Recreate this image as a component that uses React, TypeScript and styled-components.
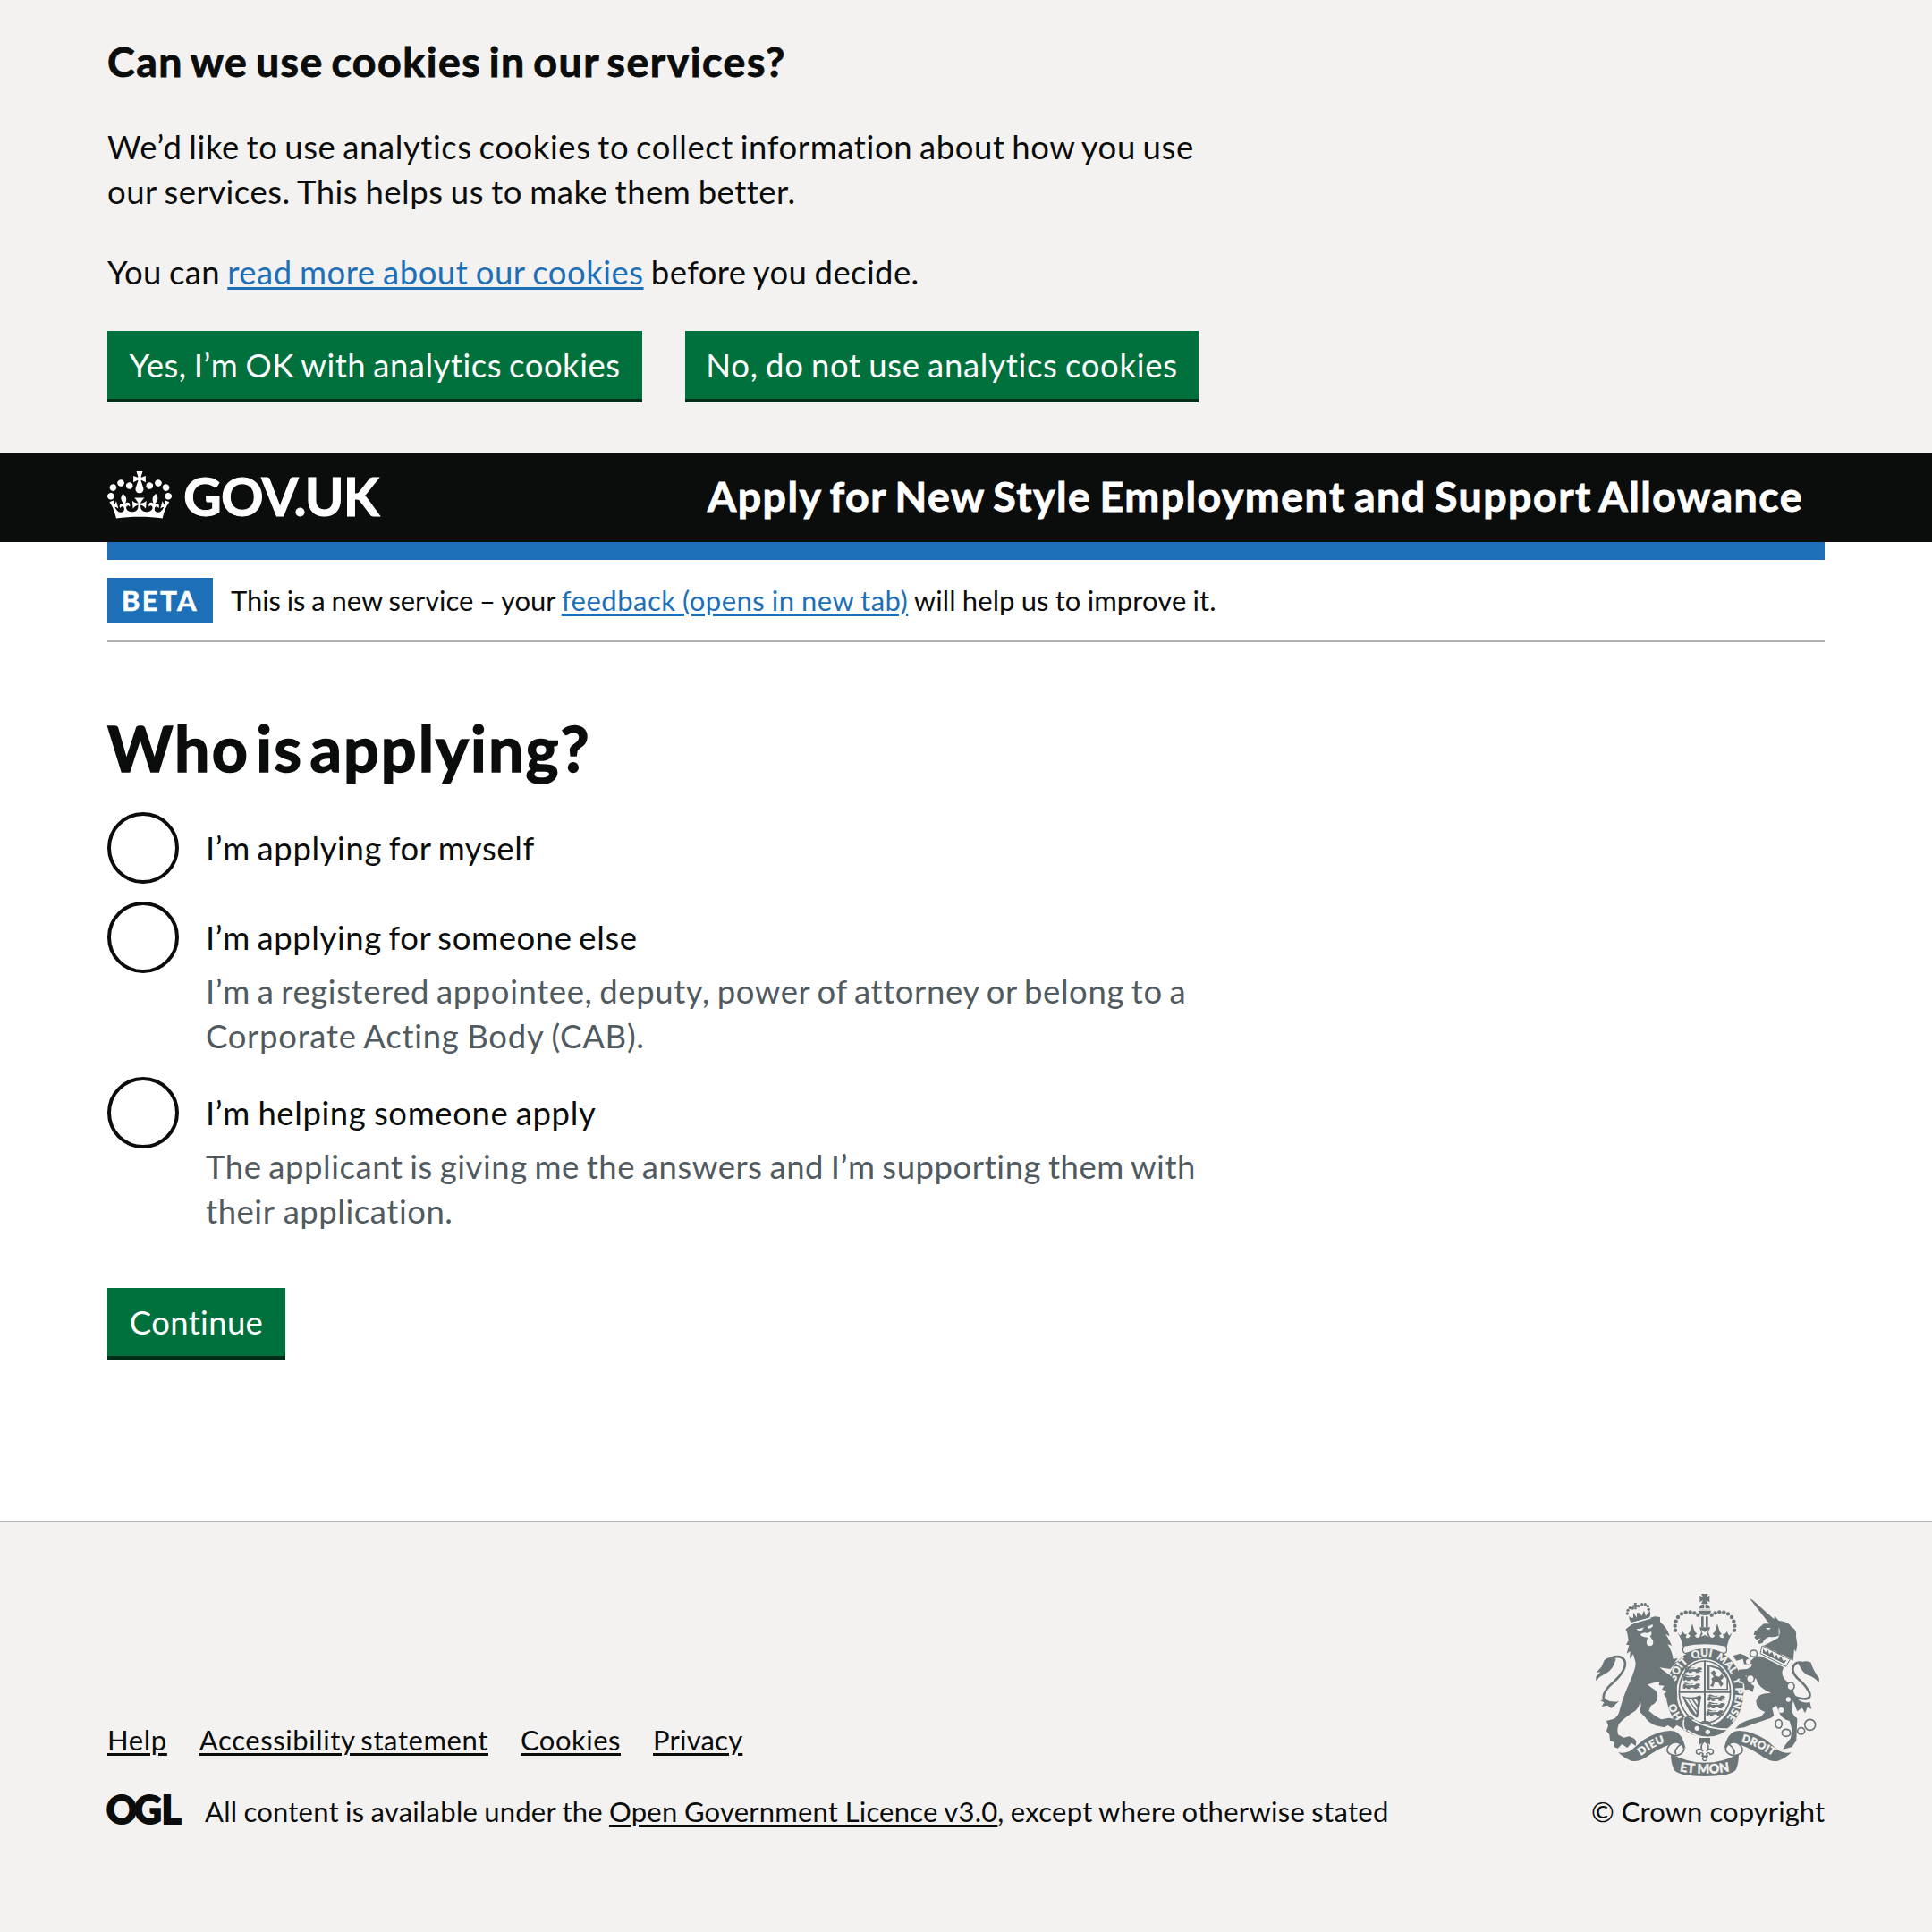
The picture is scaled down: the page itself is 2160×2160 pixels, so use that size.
import React from "react";
import styled, { createGlobalStyle } from "styled-components";

const ink = "#0b0c0c";
const blue = "#1d70b8";
const green = "#00703c";
const pale = "#f3f2f1";
const line = "#b1b4b6";
const crestGrey = "#6c7678";

const GlobalStyle = createGlobalStyle`
  * { box-sizing: border-box; }
  body {
    margin: 0;
    background: #fff;
    color: ${ink};
    font-family: Lato, "Liberation Sans", sans-serif;
    font-variant-ligatures: none;
  }
  h1, h2, p { margin: 0; }
`;

const Page = styled.div`
  display: flex;
  flex-direction: column;
  min-height: 2160px;
`;

const Container = styled.div`
  width: 1920px;
  margin: 0 auto;
`;

/* One run of text, tracked to its own width */
const Run = styled.span<{ $ls?: number; $ws?: number }>`
  letter-spacing: ${(p) => p.$ls ?? 0}px;
  word-spacing: ${(p) => p.$ws ?? 0}px;
  white-space: nowrap;
`;

const Link = styled.a<{ $tone?: string; $ls?: number; $ws?: number }>`
  color: ${(p) => p.$tone ?? ink};
  letter-spacing: ${(p) => p.$ls ?? 0}px;
  word-spacing: ${(p) => p.$ws ?? 0}px;
  white-space: nowrap;
  text-decoration: underline;
  text-decoration-thickness: 3px;
  text-underline-offset: 3px;
`;

const CookieBanner = styled.section`
  height: 506px;
  padding-top: 38px;
  background: ${pale};
`;

const CookieHeading = styled.h2`
  font-size: 46.5px;
  line-height: 60px;
  font-weight: 700;
  -webkit-text-stroke: 0.9px currentColor;
`;

const Body = styled.p`
  font-size: 36.5px;
  line-height: 50px;
`;

const CookieCopy = styled.div`
  display: flex;
  flex-direction: column;
  gap: 40px;
  margin: 41px 0;
`;

const ButtonRow = styled.div`
  display: flex;
  gap: 48px;
`;

const Button = styled.button<{ $width: number }>`
  width: ${(p) => p.$width}px;
  height: 80px;
  padding: 13px 0 17px;
  border: 0;
  background: ${green};
  box-shadow: inset 0 -4px 0 #002d18;
  color: #fff;
  font-family: inherit;
  font-size: 36.5px;
  line-height: 50px;
  white-space: nowrap;
`;

const Header = styled.header`
  height: 100px;
  background: ${ink};
  color: #fff;
`;

const HeaderInner = styled(Container)`
  display: flex;
  justify-content: space-between;
  padding-right: 24px;
`;

const Brand = styled.div`
  display: flex;
  align-items: flex-start;
  gap: 13px;
`;

const CrownSvg = styled.svg`
  display: block;
  width: 72px;
  height: 53px;
  margin-top: 21px;
`;

const BrandName = styled.span`
  margin-top: 14px;
  font-size: 59px;
  line-height: 70px;
  font-weight: 700;
  letter-spacing: -0.8px;
  -webkit-text-stroke: 1px currentColor;
`;

const ServiceName = styled.span`
  margin-top: 18px;
  font-size: 46.5px;
  line-height: 60px;
  font-weight: 700;
  -webkit-text-stroke: 0.9px currentColor;
`;

const BlueBar = styled(Container)`
  height: 20px;
  background: ${blue};
`;

const Phase = styled(Container)`
  display: flex;
  align-items: center;
  gap: 20px;
  height: 92px;
  border-bottom: 2px solid ${line};
`;

const Tag = styled.strong`
  width: 118px;
  height: 50px;
  padding-left: 16px;
  background: ${blue};
  color: #fff;
  font-size: 31px;
  line-height: 50px;
  letter-spacing: 2.45px;
  -webkit-text-stroke: 0.6px currentColor;
`;

const Small = styled.p`
  font-size: 31px;
  line-height: 40px;
  white-space: nowrap;
`;

const Main = styled(Container)`
  height: 982px;
  padding-top: 78px;
`;

const Title = styled.h1`
  margin-bottom: 32px;
  font-size: 70px;
  line-height: 80px;
  font-weight: 700;
  -webkit-text-stroke: 1.5px currentColor;
`;

const Options = styled.div`
  display: flex;
  flex-direction: column;
  gap: 21px;
`;

const Option = styled.div<{ $tight?: boolean }>`
  margin-bottom: ${(p) => (p.$tight ? "-1px" : "0")};
`;

const Choice = styled.label`
  display: flex;
  align-items: center;
  gap: 30px;
  height: 80px;
  font-size: 36.5px;
  line-height: 50px;
`;

const Radio = styled.span`
  width: 80px;
  height: 80px;
  border: 4px solid ${ink};
  border-radius: 50%;
`;

const Hint = styled(Body)`
  margin: -5px 0 0 110px;
  color: #505a5f;
`;

const Submit = styled.div`
  margin-top: 61px;
`;

const Footer = styled.footer`
  flex: 1;
  border-top: 2px solid ${line};
  background: ${pale};
`;

const FooterInner = styled(Container)`
  display: flex;
  justify-content: space-between;
  align-items: flex-end;
  height: 343px;
`;

const FooterLinks = styled.nav`
  display: flex;
  gap: 36px;
  margin-bottom: 40px;
  font-size: 31px;
  line-height: 40px;
`;

const Licence = styled.div`
  display: flex;
  gap: 27px;
`;

const OglSvg = styled.svg`
  display: block;
  width: 82px;
  height: 34px;
  margin-top: 1px;
  overflow: visible;
`;

const Copyright = styled.div`
  display: flex;
  flex-direction: column;
  align-items: flex-start;
  width: 261px;
`;

const CrestSvg = styled.svg`
  display: block;
  width: 252px;
  height: 206px;
  margin: 0 0 18px 4px;
`;

const Crown = () => (
  <CrownSvg viewBox="0 0 132 97" fill="#fff">
    <path d="M25 30.2c3.5 1.5 7.7-.2 9.1-3.7 1.5-3.6-.2-7.8-3.9-9.2-3.6-1.4-7.6.3-9.1 3.9-1.4 3.5.3 7.5 3.9 9zM9 39.5c3.6 1.5 7.8-.2 9.2-3.7 1.5-3.6-.2-7.8-3.9-9.1-3.6-1.5-7.6.2-9.1 3.8-1.4 3.5.3 7.5 3.8 9zM4.4 57.2c3.5 1.5 7.7-.2 9.1-3.8 1.5-3.6-.2-7.7-3.9-9.1-3.5-1.5-7.6.3-9.1 3.8-1.4 3.5.3 7.6 3.9 9.1zm38.3-21.4c3.5 1.5 7.7-.2 9.1-3.8 1.5-3.6-.2-7.7-3.9-9.1-3.6-1.5-7.6.3-9.1 3.8-1.3 3.6.4 7.7 3.9 9.1zm64.4-5.6c-3.6 1.5-7.8-.2-9.1-3.7-1.5-3.6.2-7.8 3.8-9.2 3.6-1.4 7.7.3 9.2 3.9 1.3 3.5-.4 7.5-3.9 9zm15.9 9.3c-3.6 1.5-7.7-.2-9.1-3.7-1.5-3.6.2-7.8 3.7-9.1 3.6-1.5 7.7.2 9.2 3.8 1.5 3.5-.3 7.5-3.8 9zm4.7 17.7c-3.6 1.5-7.8-.2-9.2-3.8-1.5-3.6.2-7.7 3.9-9.1 3.6-1.5 7.7.3 9.2 3.8 1.3 3.5-.4 7.6-3.9 9.1zM89.3 35.8c-3.6 1.5-7.8-.2-9.2-3.8-1.4-3.6.2-7.7 3.9-9.1 3.6-1.5 7.7.3 9.2 3.8 1.4 3.6-.3 7.7-3.9 9.1zM69.7 17.7l8.9 4.7V9.3l-8.9 2.8c-.2-.3-.5-.6-.9-.9L72.4 0H59.6l3.5 11.2c-.3.3-.6.5-.9.9l-8.8-2.8v13.1l8.8-4.7c.3.3.6.7.9.9l-5 15.4v.1c-.2.8-.4 1.6-.4 2.4 0 4.1 3.1 7.5 7 8.1h.2c.3 0 .7.1 1 .1.4 0 .7 0 1-.1h.2c4-.6 7.1-4.1 7.1-8.1 0-.8-.1-1.7-.4-2.4V34l-5.1-15.4c.4-.2.7-.6 1-.9zM66 92.8c16.9 0 32.8 1.1 47.1 3.2 4-16.9 8.9-26.7 14-33.5l-9.6-3.4c1 4.9 1.1 7.2 0 10.2-1.5-1.4-3-4.3-4.2-8.7L108.6 76c2.8-2 5-3.2 7.5-3.3-4.4 9.4-10 11.9-13.6 11.2-4.3-.8-6.3-4.6-5.6-7.9 1-4.7 5.7-5.9 8-.5 4.3-8.7-3-11.4-7.6-8.8 7.1-7.2 7.9-13.5 2.1-21.1-8 6.1-8.1 12.3-4.5 20.8-4.7-5.4-12.1-2.5-9.5 6.2 3.4-5.2 7.9-2 7.2 3.1-.6 4.3-6.4 7.8-13.5 7.2-10.3-.9-10.9-8-11.2-13.8 2.5-.5 7.1 1.8 11 7.3L80.2 60c-4.1 4.4-8 5.3-12.3 5.4 1.4-4.4 8-11.6 8-11.6H55.5s6.4 7.2 7.9 11.6c-4.2-.1-8-1-12.3-5.4l1.4 16.4c3.9-5.5 8.5-7.7 10.9-7.3-.3 5.8-.9 12.8-11.1 13.8-7.2.6-12.9-2.9-13.5-7.2-.7-5 3.8-8.3 7.1-3.1 2.7-8.7-4.6-11.6-9.4-6.2 3.7-8.5 3.6-14.7-4.6-20.8-5.8 7.6-5 13.9 2.2 21.1-4.7-2.6-11.9.1-7.7 8.8 2.3-5.5 7.1-4.2 8.1.5.7 3.3-1.3 7.1-5.7 7.9-3.5.7-9-1.8-13.5-11.2 2.5.1 4.7 1.3 7.5 3.3l-4.7-15.4c-1.2 4.4-2.7 7.2-4.3 8.7-1.1-3-.9-5.3 0-10.2l-9.5 3.4c5 6.9 9.9 16.7 14 33.5 14.8-2.1 30.8-3.2 47.7-3.2z" />
  </CrownSvg>
);

const archPearls = [
  [369, 188], [368, 173], [371, 158], [378, 144], [390, 133], [404, 128], [419, 127], [433, 130], [445, 137],
];

const mottoWords: [string, number][] = [
  ["HO", 114], ["SOIT", 253], ["QUI", 342], ["MAL", 428], ["Y", 492], ["PENSE", 566],
];

const Fleur = () => (
  <path d="M0 -26Q14 -12 4 2Q10 -8 18 -2Q22 8 12 10Q10 2 4 8L6 14L-6 14L-4 8Q-10 2 -12 10Q-22 8 -18 -2Q-10 -8 -4 2Q-14 -12 0 -26Z" />
);

const StripLion = () => (
  <path d="M-32 6L-30 -6L-24 -8L-18 -3L8 -4L14 -9L24 -9L28 -3L20 0L28 6L16 5L18 9L6 9L4 4L-8 4L-6 9L-18 9L-20 4L-26 9Z M-30 -9L-24 -13L-8 -8L4 -9L0 -6L-16 -6Z" />
);

const Ribbon = () => (
  <g>
    <path d="M178 598Q204 603 224 588L262 556Q310 526 352 525Q384 524 397 562L404 584L384 570Q372 562 350 572Q318 580 268 616Q246 630 222 626Q198 618 178 598Z" stroke={pale} strokeWidth="3" paintOrder="stroke" />
    <path d="M384 568Q404 580 396 594Q386 608 368 608Q344 604 342 592Q340 580 356 568Q372 560 384 568Z" fill={pale} stroke={crestGrey} strokeWidth="5" />
    <path d="M371 604Q362 588 390 568" fill="none" stroke={crestGrey} strokeWidth="5" />
  </g>
);

const Crest = () => (
  <CrestSvg viewBox="99 63 756 618" fill={crestGrey}>
    <defs>
      <path id="garter" d="M468 518A103 121 0 0 1 468 276A103 121 0 0 1 468 518" />
      <path id="scrollLeft" d="M242 619Q300 570 348 562" />
      <path id="scrollMid" d="M366 657Q468 679 572 657" />
      <path id="scrollRight" d="M580 559Q640 572 706 616" />
    </defs>

    {/* royal crown */}
    <path d="M456 66H479L473 77L484 71V94L473 88L479 99H456L462 88L451 94V71L462 77Z" />
    <path d="M449 118Q450 100 468 100Q485 100 486 118Z" />
    <path d="M446 122H489Q488 138 468 138Q447 138 446 122Z" />
    <path d="M466 100H470V118H466ZM449 114H486V116H449Z" fill={pale} />
    <path d="M456 142H464V178H456ZM471 142H479V178H471Z" />
    {archPearls.map(([x, y]) => (
      <React.Fragment key={`${x}-${y}`}>
        <circle cx={x} cy={y} r="6.6" />
        <circle cx={936 - x} cy={y} r="6.6" />
      </React.Fragment>
    ))}
    <path d="M376 196L386 206L394 192Q400 206 408 200L404 212Q412 218 420 206L412 200L418 192L426 166L434 192L442 200L434 206Q442 218 450 210L456 196L450 178H486L480 196L486 210Q494 218 502 206L494 200L502 192L510 166L518 192L524 200L516 206Q524 218 532 212L528 200Q536 206 542 192L550 206L560 196Q546 220 542 244Q468 228 394 244Q392 220 376 196Z" />
    <path d="M455 186L468 194L481 186L475 200L481 210L468 204L455 210L461 200Z" fill={pale} />
    <path d="M398 240Q468 226 538 240Q548 262 532 266Q468 240 404 266Q388 262 398 240Z" fill={pale} stroke={crestGrey} strokeWidth="4" />

    {/* garter and shield */}
    <ellipse cx="468" cy="397" rx="130" ry="148" />
    <ellipse cx="468" cy="397" rx="95" ry="113" fill={pale} />
    <ellipse cx="468" cy="395" rx="86" ry="104" fill="none" stroke={crestGrey} strokeWidth="5" />
    <path d="M465 290H471V500H465ZM382 392H554V398H382Z" />
    {[0, 1, 2].map((i) => (
      <React.Fragment key={i}>
        <g transform={`translate(${i === 0 ? 432 : 426} ${322 + i * 27})`}><StripLion /></g>
        <g transform={`translate(${i === 2 ? 504 : 509} ${416 + i * 25})`}><StripLion /></g>
      </React.Fragment>
    ))}
    <path d="M480 306H484V384H544V388H476V302ZM484 304L520 314L546 346V388H541V350L516 320L484 310Z" />
    <path d="M488 330L498 322L506 330L502 340L516 344L526 334L532 346L522 356L530 368L522 378L514 364L502 360L496 378L486 374L494 362L490 350L498 344Z" />
    <path d="M392 408Q424 420 452 406L456 412L446 474Q446 484 438 480L418 462Q404 440 392 408ZM400 415L438 470L441 466L410 418ZM414 419L442 458V446L424 420ZM430 420L443 438L445 430L438 418Z" fillRule="evenodd" />
    <g fill={pale} stroke={pale} strokeWidth="1" fontFamily="Lato, sans-serif" fontWeight="900" fontSize="35">
      {mottoWords.map(([word, at]) => (
        <text key={word} textAnchor="middle">
          <textPath href="#garter" startOffset={at}>{word}</textPath>
        </text>
      ))}
    </g>
    <path d="M400 482Q392 500 400 520L414 526Q440 545 476 547Q520 548 548 520Q480 520 426 488Q414 470 400 482Z" stroke={pale} strokeWidth="5" />
    <path d="M398 488Q414 470 428 484Q408 492 408 524" fill="none" stroke={crestGrey} strokeWidth="5" />
    <circle cx="442" cy="517" r="8" fill={pale} />
    <circle cx="478" cy="529" r="8" fill={pale} />
    <path d="M454 502L460 492H478L488 498L490 508Z" />

    {/* lion */}
    <path d="M166 440Q132 434 128 414Q126 392 164 360Q206 320 200 294Q192 268 156 280" fill="none" stroke={crestGrey} strokeWidth="8" />
    <path d="M170 284Q146 272 130 290L122 310L104 330L118 328L103 344L103 358Q116 342 134 334Q160 322 170 284Z" />
    <path d="M134 418L118 424L130 430L122 444L142 440L154 450L180 426Q152 432 134 418Z" />
    <path d="M203 184L224 168Q262 152 300 142L318 144L318 160Q342 180 350 208L336 200Q352 224 357 240L343 234Q358 258 362 284L378 282L366 296L376 292L352 318L316 313L350 338Q374 356 374 388L376 414L362 426L348 420L354 412L338 414L330 402L342 394L324 386L332 374L314 372L316 360Q298 362 276 370Q286 380 300 388Q312 398 309 416Q304 434 288 440L280 458Q300 476 322 487L348 482Q374 485 389 500L387 514L374 506L362 518L344 507L332 514L304 508Q280 500 266 478L250 462L254 440L248 408Q256 440 235 458Q198 480 180 502Q172 520 177 538L196 548L214 544Q236 550 238 562L236 576L222 566L208 582L190 570L176 584L164 580L165 564L150 558L148 538L138 526L144 508L138 492L160 486Q178 480 184 450Q194 410 216 362Q236 318 236 298L228 268L216 284L218 258L206 266L214 238L204 236L212 222L208 198Z" />
    <path d="M238 184L252 182L264 178Q258 192 248 192ZM275 176L292 168L294 174Q288 184 278 182Z" fill={pale} />
    <path d="M252 200L266 196L276 198L288 192Q292 204 284 208L294 222Q298 240 284 241Q270 240 273 224L276 212L262 210L254 206Z" fill={pale} />
    <path d="M214 140Q214 166 230 160L280 147Q288 138 284 122L276 132L270 140L264 122L256 140L250 130L240 130L240 146L228 128L228 146L220 146Z" />
    <path d="M222 165L286 147" stroke={pale} strokeWidth="4" />
    <path d="M230 96H240L238 102H244V110H238L240 118H232L232 110H226V103H232Z" />
    {[[208, 132], [210, 121], [217, 113], [226, 114], [246, 107], [257, 101], [268, 101], [277, 107], [280, 118]].map(([x, y]) => (
      <circle key={`${x}-${y}`} cx={x} cy={y} r="5" />
    ))}

    {/* unicorn */}
    <path d="M618 81L628 86L702 152L684 166Z" />
    <path d="M684 166L700 150L702 140L716 156Q748 158 758 176Q778 186 774 208L778 236L774 260L768 252L764 290L745 278L730 270L716 268L704 258L692 256L680 246L664 240Q690 228 714 214Q724 196 716 178L716 206Q702 212 684 210Q666 216 662 230L650 234L646 226L656 214L642 220L634 212L640 204L632 204L634 194Q650 180 666 166Z" />
    <path d="M672 180L690 180L682 187Z" fill={pale} />
    <path d="M660 240L754 286L740 310L654 266Z" fill={pale} stroke={crestGrey} strokeWidth="3" />
    <path d="M664 250L672 262L680 254L684 268L694 260L700 276L710 270L714 284L724 276L730 290L742 288L734 300L662 264Z" />
    <path d="M640 274L660 276L732 312Q718 342 746 362Q774 386 766 418L760 444Q758 472 778 484L775 558L760 580L730 587L738 572L756 550L760 520L752 492Q724 486 716 460L708 440L694 450L700 474L690 482L626 504L600 514L570 518L588 500L612 490L656 478L670 462Q640 452 640 426Q644 402 674 400L690 398Q646 380 640 350L604 340L614 360L634 376L628 396L616 386L602 388L600 368L578 344L582 320L610 318L624 310L626 300L600 302L596 284L574 290L562 274L586 266L606 274L622 290Z" />
    <path d="M766 410Q826 430 820 400Q810 376 782 352Q750 320 772 300Q782 292 800 300" fill="none" stroke={crestGrey} strokeWidth="8" />
    <path d="M782 300Q800 286 824 296Q830 320 852 350L851 364Q836 344 812 338Q796 332 782 300Z" />
    <path d="M768 400Q786 440 820 428L826 452L812 446L804 466L794 448L778 460Q764 430 758 400Z" />
    <g fill={pale} stroke={crestGrey} strokeWidth="5">
      <ellipse cx="632" cy="266" rx="12" ry="11" />
      <ellipse cx="621" cy="350" rx="13" ry="13" />
      <ellipse cx="756" cy="376" rx="12" ry="13" />
      <ellipse cx="716" cy="502" rx="11" ry="14" />
      <ellipse cx="741" cy="532" rx="14" ry="12" />
      <ellipse cx="791" cy="526" rx="12" ry="11" />
      <circle cx="821" cy="505" r="18" />
    </g>
    <circle cx="748" cy="420" r="8" fill={pale} />
    <circle cx="724" cy="456" r="9" fill={pale} />
    <circle cx="614" cy="293" r="8" fill={pale} />

    {/* motto scroll */}
    <path d="M450 549H486V572L468 560L450 572Z" />
    <g transform="translate(468 592) scale(1.5 1.25)" fill={pale} stroke={crestGrey} strokeWidth="3.4"><Fleur /></g>
    <circle cx="468" cy="619" r="7" fill={pale} stroke={crestGrey} strokeWidth="4" />
    <Ribbon />
    <g transform="translate(936 0) scale(-1 1)"><Ribbon /></g>
    <path d="M354 602Q410 632 468 632Q528 632 582 602Q582 632 573 655Q566 666 540 672Q504 678 468 678Q432 678 396 672Q370 666 364 655Q354 632 354 602Z" />
    <g fill={pale} stroke={pale} strokeWidth="1.2" fontFamily="Lato, sans-serif" fontWeight="900">
      <text textAnchor="middle" fontSize="36" letterSpacing="2"><textPath href="#scrollLeft" startOffset="51%">DIEU</textPath></text>
      <text textAnchor="middle" fontSize="43"><textPath href="#scrollMid" startOffset="49%">ET MON</textPath></text>
      <text textAnchor="middle" fontSize="36" letterSpacing="1"><textPath href="#scrollRight" startOffset="50%">DROIT</textPath></text>
    </g>
  </CrestSvg>
);

export default function App() {
  return (
    <Page>
      <GlobalStyle />
      <CookieBanner>
        <Container>
          <CookieHeading><Run $ls={1.5} $ws={-4.3}>Can we use cookies in our services?</Run></CookieHeading>
          <CookieCopy>
            <Body>
              <Run $ls={0.6} $ws={-2.2}>We’d like to use analytics cookies to collect information about how you use</Run>
              <br />
              <Run $ls={0.5} $ws={-1.5}>our services. This helps us to make them better.</Run>
            </Body>
            <Body>
              <Run $ls={0.25} $ws={-1.1}>You can </Run>
              <Link $tone={blue} $ls={0.5} $ws={-1.4}>read more about our cookies</Link>
              <Run $ls={0.4} $ws={-1.5}> before you decide.</Run>
            </Body>
          </CookieCopy>
          <ButtonRow>
            <Button $width={598}><Run $ls={0.5} $ws={-1.7}>Yes, I’m OK with analytics cookies</Run></Button>
            <Button $width={574}><Run $ls={0.7} $ws={-1.7}>No, do not use analytics cookies</Run></Button>
          </ButtonRow>
        </Container>
      </CookieBanner>

      <Header>
        <HeaderInner>
          <Brand>
            <Crown />
            <BrandName>GOV.UK</BrandName>
          </Brand>
          <ServiceName><Run $ls={1.46} $ws={-3.4}>Apply for New Style Employment and Support Allowance</Run></ServiceName>
        </HeaderInner>
      </Header>
      <BlueBar />
      <Phase>
        <Tag>BETA</Tag>
        <Small>
          <Run $ls={-0.1} $ws={-0.9}>This is a new service – your </Run>
          <Link $tone={blue} $ls={0.5} $ws={-1}>feedback (opens in new tab)</Link>
          <Run $ls={0.1} $ws={-0.9}> will help us to improve it.</Run>
        </Small>
      </Phase>

      <Main as="main">
        <Title><Run $ls={2.05} $ws={-11.6}>Who is applying?</Run></Title>
        <Options>
          <Option $tight>
            <Choice><Radio /><Run $ls={0.6} $ws={-2.2}>I’m applying for myself</Run></Choice>
          </Option>
          <Option>
            <Choice><Radio /><Run $ls={0.6} $ws={-2.3}>I’m applying for someone else</Run></Choice>
            <Hint>
              <Run $ls={0.6} $ws={-2.1}>I’m a registered appointee, deputy, power of attorney or belong to a</Run>
              <br />
              <Run $ls={0.7} $ws={-1.1}>Corporate Acting Body (CAB).</Run>
            </Hint>
          </Option>
          <Option>
            <Choice><Radio /><Run $ls={0.6} $ws={-1.4}>I’m helping someone apply</Run></Choice>
            <Hint>
              <Run $ls={0.55} $ws={-2.1}>The applicant is giving me the answers and I’m supporting them with</Run>
              <br />
              <Run $ls={0.55}>their application.</Run>
            </Hint>
          </Option>
        </Options>
        <Submit><Button $width={199}><Run $ls={0.35}>Continue</Run></Button></Submit>
      </Main>

      <Footer>
        <FooterInner>
          <div>
            <FooterLinks>
              <Link $ls={0.65}>Help</Link>
              <Link $ls={0.6} $ws={-2}>Accessibility statement</Link>
              <Link $ls={0.5}>Cookies</Link>
              <Link $ls={0.2}>Privacy</Link>
            </FooterLinks>
            <Licence>
              <OglSvg viewBox="0 0 82 34">
                <text x="-1.2 31 62.5" y="33" transform="scale(0.967 1)" fill={ink} stroke={ink} strokeWidth="1.8" fontFamily="Lato, sans-serif" fontWeight="900" fontSize="44">OGL</text>
              </OglSvg>
              <Small>
                <Run $ls={0.25} $ws={-1.1}>All content is available under the </Run>
                <Link $ls={0.2} $ws={-0.6}>Open Government Licence v3.0</Link>
                <Run $ls={0.3} $ws={-1.2}>, except where otherwise stated</Run>
              </Small>
            </Licence>
          </div>
          <Copyright>
            <Crest />
            <Small><Run $ls={0.07}>© Crown copyright</Run></Small>
          </Copyright>
        </FooterInner>
      </Footer>
    </Page>
  );
}
